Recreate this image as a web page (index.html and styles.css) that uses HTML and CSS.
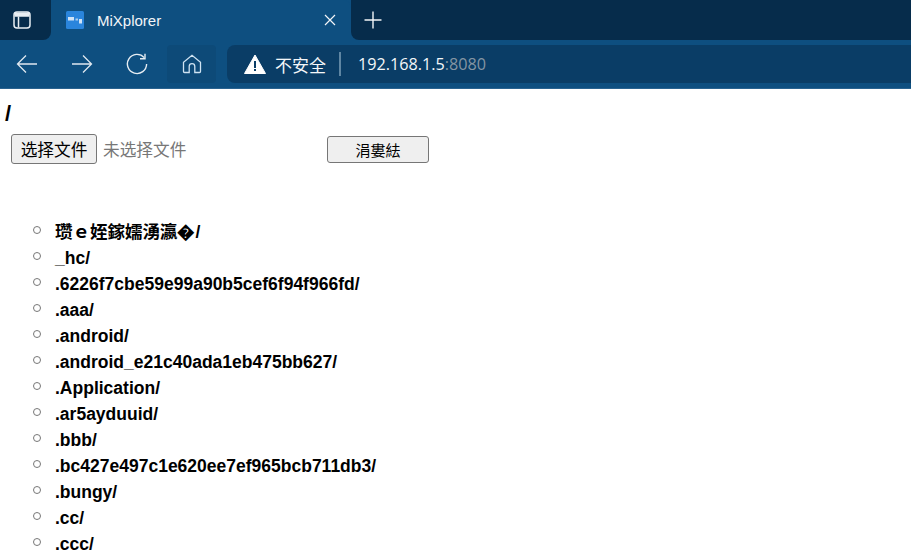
FILE: index.html
```html
<!DOCTYPE html>
<html lang="zh">
<head>
<meta charset="utf-8">
<title>MiXplorer</title>
<link rel="stylesheet" href="styles.css">
</head>
<body>
<header class="browser">
  <div class="tabstrip">
    <div class="tab-actions">
      <svg class="icon-sidebar" width="20" height="20" viewBox="0 0 20 20" fill="none" stroke="#e8eef3" stroke-width="1.5"><rect x="2" y="2" width="16" height="16" rx="3"/><path d="M2.5 6h15M2.5 4.5h15M2.5 3.200h15"/><path d="M6.500 6.500v11"/></svg>
    </div>
    <div class="tab">
      <svg class="favicon" width="18" height="18" viewBox="0 0 18 18"><rect width="18" height="18" rx="1.5" fill="#2a85dc"/><rect x="2" y="6" width="6" height="3.500" fill="#cfe3f6"/><rect x="9.500" y="7.500" width="2.500" height="2" fill="#a9cdee"/><rect x="13" y="8" width="3" height="4.500" fill="#cfe3f6"/></svg>
      <span class="tab-title">MiXplorer</span>
      <svg class="tab-close" width="12" height="12" viewBox="0 0 12 12" stroke="#f2f5f8" stroke-width="1.2" fill="none"><path d="M1 1l10 10M11 1L1 11"/></svg>
    </div>
    <div class="tab-rest">
      <svg width="20" height="20" viewBox="0 0 20 20" stroke="#f2f5f8" stroke-width="1.4" fill="none"><path d="M10 1.500v17M1.500 10h17"/></svg>
    </div>
  </div>
  <div class="toolbar">
    <nav class="nav">
      <span class="nav-btn"><svg width="22" height="22" viewBox="0 0 22 22" fill="none" stroke="#dfe8ef" stroke-width="1.300"><path d="M21 11H1.500M10 2.500L1.500 11l8.500 8.500"/></svg></span>
      <span class="nav-btn"><svg width="22" height="22" viewBox="0 0 22 22" fill="none" stroke="#dfe8ef" stroke-width="1.300"><path d="M1 11h19.500M12 2.500l8.500 8.500-8.500 8.500"/></svg></span>
      <span class="nav-btn"><svg width="22" height="22" viewBox="0 0 22 22" fill="none" stroke="#e6edf2" stroke-width="1.400"><path d="M18.200 4.600A9.600 9.600 0 1 0 20.600 11"/><path d="M19 .8v5h-5"/></svg></span>
      <span class="nav-btn nav-home"><svg width="20" height="20" viewBox="0 0 20 20" fill="none" stroke="#cfe3f2" stroke-width="1.300"><path d="M2.500 18.500h4.700v-6a2.800 2.800 0 0 1 5.600 0v6h4.700a1 1 0 0 0 1-1V8.200L10 1.300 1.500 8.200v9.300a1 1 0 0 0 1 1z"/></svg></span>
    </nav>
    <div class="omnibox">
      <svg class="warn" width="22" height="20" viewBox="0 0 22 20"><path d="M11 1L21.500 19.500H.5z" fill="#fff" stroke="#fff" stroke-linejoin="round"/><rect x="10" y="7" width="2" height="7" fill="#0a3d66"/><rect x="10" y="15" width="2" height="2" fill="#0a3d66"/></svg>
      <span class="insecure">不安全</span>
      <span class="sep"></span>
      <span class="host">192.168.1.5<span class="port">:8080</span></span>
    </div>
  </div>
</header>
<main class="page">
  <h2 class="path">/</h2>
  <form class="upload">
    <button type="button" class="choose">选择文件</button>
    <span class="nofile">未选择文件</span>
    <button type="button" class="submit">涓婁紶</button>
  </form>
  <ul class="files">
    <li>瓒ｅ姪鎵嬬湧瀛�/</li>
    <li>_hc/</li>
    <li>.6226f7cbe59e99a90b5cef6f94f966fd/</li>
    <li>.aaa/</li>
    <li>.android/</li>
    <li>.android_e21c40ada1eb475bb627/</li>
    <li>.Application/</li>
    <li>.ar5ayduuid/</li>
    <li>.bbb/</li>
    <li>.bc427e497c1e620ee7ef965bcb711db3/</li>
    <li>.bungy/</li>
    <li>.cc/</li>
    <li>.ccc/</li>
  </ul>
</main>
</body>
</html>
```
FILE: styles.css
```css
html, body {
  margin: 0;
  padding: 0;
  height: 554px;
  overflow: hidden;
  background: #fff;
  font-family: "Liberation Sans", "Noto Sans CJK SC", sans-serif;
}

.browser {
  background: #0e4f80;
  border-bottom: 1px solid #2a6390;
}

.tabstrip {
  display: flex;
  height: 40px;
  background: #0e4f80;
}

.tab-actions {
  width: 51px;
  display: flex;
  align-items: center;
  padding-left: 12px;
  box-sizing: border-box;
  background: #062c4b;
  border-bottom-right-radius: 8px;
}

.tab {
  width: 300px;
  display: flex;
  align-items: center;
  padding: 0 15px;
  box-sizing: border-box;
  background: #0e4f80;
  border-radius: 8px 8px 0 0;
  color: #f2f5f8;
}

.favicon {
  flex: none;
}

.tab-title {
  margin-left: 13px;
  font: 15px "Liberation Sans", sans-serif;
}

.tab-close {
  margin-left: auto;
}

.tab-rest {
  flex: 1;
  display: flex;
  align-items: center;
  padding-left: 12px;
  background: #062c4b;
  border-bottom-left-radius: 8px;
}

.toolbar {
  display: flex;
  align-items: center;
  height: 48px;
}

.nav {
  display: flex;
  width: 227px;
  padding-left: 6px;
  box-sizing: border-box;
  height: 38px;
}

.nav-btn {
  width: 42px;
  height: 38px;
  margin-right: 13px;
  display: flex;
  align-items: center;
  justify-content: center;
}

.nav-home {
  width: 49px;
  margin: 0 0 0 -4px;
  background: #0d4a78;
  border-radius: 4px;
}

.omnibox {
  flex: 1;
  display: flex;
  align-items: center;
  height: 38px;
  padding-left: 17px;
  background: #0a3d66;
  border-radius: 8px 0 0 8px;
  color: #f4f7f9;
  font-size: 17px;
}

.warn {
  flex: none;
}

.insecure {
  margin-left: 9px;
  font-family: "Noto Sans CJK SC", sans-serif;
}

.sep {
  width: 2px;
  height: 24px;
  margin: 0 17px 0 13px;
  background: #5f86a3;
}

.host {
  font: 16.2px "Open Sans", "Liberation Sans", sans-serif;
}

.port {
  color: #8495a3;
}

.page {
  color: #000;
}

.path {
  margin: 14px 0 0 5px;
  font-size: 22px;
  line-height: 22px;
  font-weight: bold;
}

.upload {
  display: flex;
  align-items: flex-start;
  height: 30px;
  margin: 9px 0 0 11px;
}

.upload button {
  box-sizing: border-box;
  padding: 0;
  border: 1px solid #767676;
  border-radius: 3px;
  background: #efefef;
  color: #000;
  font-family: "Noto Sans CJK SC", sans-serif;
}

.choose {
  width: 86px;
  height: 30px;
  font-size: 16.7px;
}

.nofile {
  width: 224px;
  margin-left: 6px;
  color: #777;
  font: 16.7px/31px "Noto Sans CJK SC", sans-serif;
}

.upload .submit {
  width: 102px;
  height: 27px;
  margin-top: 2px;
  font-size: 15px;
}

.files {
  margin: 55px 0 0;
  padding: 0 0 0 33px;
  list-style: none;
  font-size: 17.5px;
  line-height: 26px;
  font-weight: bold;
}

.files li {
  display: flex;
  align-items: center;
  height: 26px;
}

.files li::before {
  content: "";
  flex: none;
  box-sizing: border-box;
  width: 8px;
  height: 8px;
  margin: -5px 14px 0 0;
  border: 1px solid #777;
  border-radius: 50%;
}
```
